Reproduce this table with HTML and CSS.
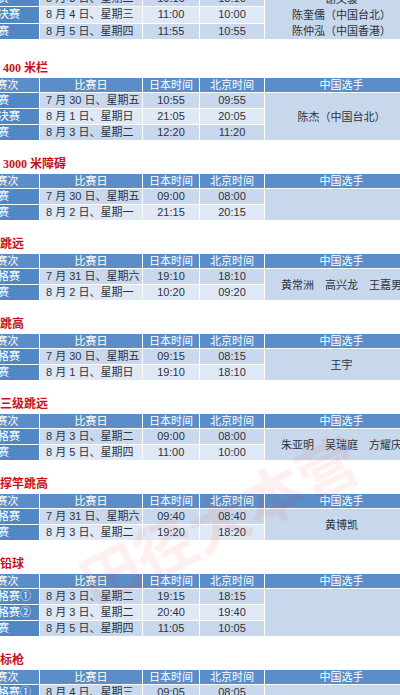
FILE: index.html
```html
<!DOCTYPE html>
<html lang="zh">
<head>
<meta charset="utf-8">
<link rel="stylesheet" href="styles.css">
</head>
<body>
<div class="page">
  <div class="sheet">
    <table class="sched first">
      <colgroup><col class="c1"><col class="c2"><col class="c3"><col class="c4"><col class="c5"></colgroup>
      <tr class="odd"><td class="rnd">预赛</td><td class="d">8 月 3 日、星期二</td><td class="t">19:10</td><td class="t">18:10</td><td class="p" rowspan="3">谢文骏<br>陈奎儒（中国台北）<br>陈仲泓（中国香港）</td></tr>
      <tr class="even"><td class="rnd">半决赛</td><td class="d">8 月 4 日、星期三</td><td class="t">11:00</td><td class="t">10:00</td></tr>
      <tr class="odd"><td class="rnd">决赛</td><td class="d">8 月 5 日、星期四</td><td class="t">11:55</td><td class="t">10:55</td></tr>
    </table>

    <h3 class="ev">男子 400 米栏</h3>
    <table class="sched">
      <colgroup><col class="c1"><col class="c2"><col class="c3"><col class="c4"><col class="c5"></colgroup>
      <tr class="hd"><th>赛次</th><th>比赛日</th><th>日本时间</th><th>北京时间</th><th>中国选手</th></tr>
      <tr class="odd"><td class="rnd">预赛</td><td class="d">7 月 30 日、星期五</td><td class="t">10:55</td><td class="t">09:55</td><td class="p" rowspan="3">陈杰（中国台北）</td></tr>
      <tr class="even"><td class="rnd">半决赛</td><td class="d">8 月 1 日、星期日</td><td class="t">21:05</td><td class="t">20:05</td></tr>
      <tr class="odd"><td class="rnd">决赛</td><td class="d">8 月 3 日、星期二</td><td class="t">12:20</td><td class="t">11:20</td></tr>
    </table>

    <h3 class="ev">男子 3000 米障碍</h3>
    <table class="sched">
      <colgroup><col class="c1"><col class="c2"><col class="c3"><col class="c4"><col class="c5"></colgroup>
      <tr class="hd"><th>赛次</th><th>比赛日</th><th>日本时间</th><th>北京时间</th><th>中国选手</th></tr>
      <tr class="odd"><td class="rnd">预赛</td><td class="d">7 月 30 日、星期五</td><td class="t">09:00</td><td class="t">08:00</td><td class="p" rowspan="2"></td></tr>
      <tr class="even"><td class="rnd">决赛</td><td class="d">8 月 2 日、星期一</td><td class="t">21:15</td><td class="t">20:15</td></tr>
    </table>

    <h3 class="ev">男子跳远</h3>
    <table class="sched">
      <colgroup><col class="c1"><col class="c2"><col class="c3"><col class="c4"><col class="c5"></colgroup>
      <tr class="hd"><th>赛次</th><th>比赛日</th><th>日本时间</th><th>北京时间</th><th>中国选手</th></tr>
      <tr class="odd"><td class="rnd">资格赛</td><td class="d">7 月 31 日、星期六</td><td class="t">19:10</td><td class="t">18:10</td><td class="p" rowspan="2">黄常洲　高兴龙　王嘉男</td></tr>
      <tr class="even"><td class="rnd">决赛</td><td class="d">8 月 2 日、星期一</td><td class="t">10:20</td><td class="t">09:20</td></tr>
    </table>

    <h3 class="ev">男子跳高</h3>
    <table class="sched">
      <colgroup><col class="c1"><col class="c2"><col class="c3"><col class="c4"><col class="c5"></colgroup>
      <tr class="hd"><th>赛次</th><th>比赛日</th><th>日本时间</th><th>北京时间</th><th>中国选手</th></tr>
      <tr class="odd"><td class="rnd">资格赛</td><td class="d">7 月 30 日、星期五</td><td class="t">09:15</td><td class="t">08:15</td><td class="p" rowspan="2">王宇</td></tr>
      <tr class="even"><td class="rnd">决赛</td><td class="d">8 月 1 日、星期日</td><td class="t">19:10</td><td class="t">18:10</td></tr>
    </table>

    <h3 class="ev">男子三级跳远</h3>
    <table class="sched">
      <colgroup><col class="c1"><col class="c2"><col class="c3"><col class="c4"><col class="c5"></colgroup>
      <tr class="hd"><th>赛次</th><th>比赛日</th><th>日本时间</th><th>北京时间</th><th>中国选手</th></tr>
      <tr class="odd"><td class="rnd">资格赛</td><td class="d">8 月 3 日、星期二</td><td class="t">09:00</td><td class="t">08:00</td><td class="p" rowspan="2">朱亚明　吴瑞庭　方耀庆</td></tr>
      <tr class="even"><td class="rnd">决赛</td><td class="d">8 月 5 日、星期四</td><td class="t">11:00</td><td class="t">10:00</td></tr>
    </table>

    <h3 class="ev">男子撑竿跳高</h3>
    <table class="sched">
      <colgroup><col class="c1"><col class="c2"><col class="c3"><col class="c4"><col class="c5"></colgroup>
      <tr class="hd"><th>赛次</th><th>比赛日</th><th>日本时间</th><th>北京时间</th><th>中国选手</th></tr>
      <tr class="odd"><td class="rnd">资格赛</td><td class="d">7 月 31 日、星期六</td><td class="t">09:40</td><td class="t">08:40</td><td class="p" rowspan="2">黄博凯</td></tr>
      <tr class="even"><td class="rnd">决赛</td><td class="d">8 月 3 日、星期二</td><td class="t">19:20</td><td class="t">18:20</td></tr>
    </table>

    <h3 class="ev">男子铅球</h3>
    <table class="sched">
      <colgroup><col class="c1"><col class="c2"><col class="c3"><col class="c4"><col class="c5"></colgroup>
      <tr class="hd"><th>赛次</th><th>比赛日</th><th>日本时间</th><th>北京时间</th><th>中国选手</th></tr>
      <tr class="odd"><td class="rnd">资格赛①</td><td class="d">8 月 3 日、星期二</td><td class="t">19:15</td><td class="t">18:15</td><td class="p" rowspan="3"></td></tr>
      <tr class="even"><td class="rnd">资格赛②</td><td class="d">8 月 3 日、星期二</td><td class="t">20:40</td><td class="t">19:40</td></tr>
      <tr class="odd"><td class="rnd">决赛</td><td class="d">8 月 5 日、星期四</td><td class="t">11:05</td><td class="t">10:05</td></tr>
    </table>

    <h3 class="ev">男子标枪</h3>
    <table class="sched">
      <colgroup><col class="c1"><col class="c2"><col class="c3"><col class="c4"><col class="c5"></colgroup>
      <tr class="hd"><th>赛次</th><th>比赛日</th><th>日本时间</th><th>北京时间</th><th>中国选手</th></tr>
      <tr class="odd"><td class="rnd">资格赛①</td><td class="d">8 月 4 日、星期三</td><td class="t">09:05</td><td class="t">08:05</td><td class="p" rowspan="3"></td></tr>
      <tr class="even"><td class="rnd">资格赛②</td><td class="d">8 月 4 日、星期三</td><td class="t">10:35</td><td class="t">09:35</td></tr>
      <tr class="odd"><td class="rnd">决赛</td><td class="d">8 月 7 日、星期六</td><td class="t">20:00</td><td class="t">19:00</td></tr>
    </table>

    <span class="mark">田径大本营</span>
  </div>
</div>
</body>
</html>
```

FILE: styles.css
```css
html, body {
  margin: 0;
  padding: 0;
  background: #ffffff;
}

.page {
  width: 400px;
  height: 695px;
  overflow: hidden;
}

.sheet {
  position: relative;
  width: 443px;
  margin-left: -24px;
  margin-top: -9px;
  font-family: "Liberation Sans", "Noto Sans CJK SC", sans-serif;
  font-size: 11px;
  color: #2b3340;
}

.sched {
  border-collapse: separate;
  border-spacing: 0;
  table-layout: fixed;
  width: 443px;
}

.c1 { width: 64px; }
.c2 { width: 103px; }
.c3 { width: 57px; }
.c4 { width: 65px; }
.c5 { width: 154px; }

.sched th,
.sched td {
  padding: 0;
  border-right: 1px solid #ffffff;
  border-bottom: 1px solid #ffffff;
  white-space: nowrap;
  overflow: hidden;
}

.sched th {
  height: 14px;
  line-height: 14px;
  background: #5b8dc8;
  color: #ffffff;
  font-weight: normal;
  text-align: center;
}

.sched td {
  height: 15px;
  line-height: 15px;
}

.sched td.rnd {
  background: #5088c6;
  color: #ffffff;
  padding-left: 11px;
  text-align: left;
}

.odd td { background: #c9d8ec; }
.even td { background: #dfe8f4; }

.sched td.d {
  padding-left: 6px;
  text-align: left;
}

.sched td.t {
  text-align: center;
}

.sched td.p {
  background: #c7d7ec;
  text-align: center;
  line-height: 16px;
  vertical-align: middle;
}

.ev {
  margin: 16px 0 3px 0;
  height: 14px;
  line-height: 14px;
  font-family: "Liberation Serif", "Noto Sans CJK SC", serif;
  font-size: 12px;
  font-weight: bold;
  color: #c8111b;
}

.first + .ev {
  margin-top: 21px;
}

.mark {
  position: absolute;
  left: 120px;
  top: 560px;
  font-family: "Noto Sans CJK SC", sans-serif;
  font-weight: bold;
  font-size: 60px;
  line-height: 60px;
  white-space: nowrap;
  color: rgba(235, 70, 40, 0.08);
  transform: rotate(-26deg);
  transform-origin: left bottom;
  pointer-events: none;
}
```
